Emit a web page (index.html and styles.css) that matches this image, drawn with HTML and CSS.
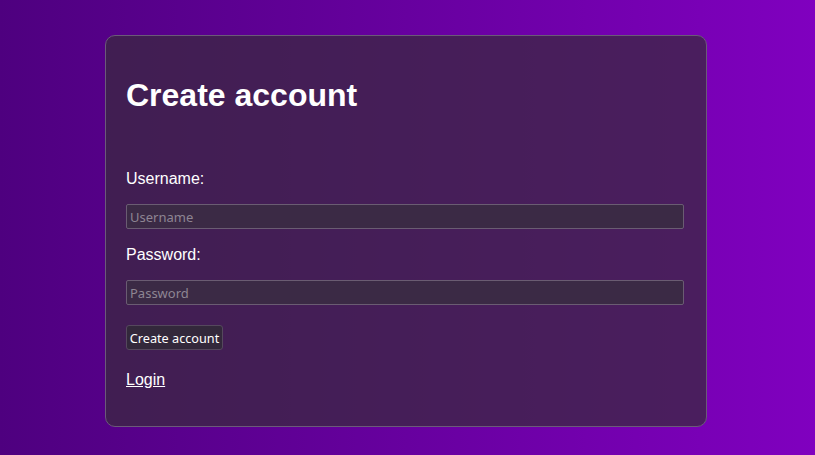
FILE: index.html
```html
<!DOCTYPE html>
<html>
<head>
<meta charset="utf-8">
<link rel="stylesheet" href="styles.css">
</head>
<body>
<main class="page">
  <section class="card">
    <h1 class="title">Create account</h1>
    <form class="form">
      <label class="label" for="u">Username:</label>
      <input class="field" id="u" type="text" placeholder="Username">
      <label class="label" for="p">Password:</label>
      <input class="field field-last" id="p" type="password" placeholder="Password">
      <button class="btn" type="button">Create account</button>
    </form>
    <p class="foot"><a class="link" href="#">Login</a></p>
  </section>
</main>
</body>
</html>
```
FILE: styles.css
```css
html, body {
  margin: 0;
  height: 100%;
}
body {
  background: linear-gradient(to right, #4e007f, #8000bf);
  font-family: "Liberation Sans", Arial, sans-serif;
  color: #fff;
}
.page {
  padding: 35px 3px 0 0;
}
.card {
  box-sizing: border-box;
  width: 602px;
  margin: 0 auto;
  padding: 20px;
  border: 1px solid #6b5a78;
  border-radius: 10px;
  background: rgba(58, 40, 64, 0.74);
}
.title {
  margin: 21px 0 0;
  font-size: 32px;
  line-height: 37px;
  font-weight: bold;
}
.form {
  display: flex;
  flex-direction: column;
  align-items: flex-start;
  margin-top: 56px;
}
.label {
  font-size: 16px;
  line-height: 18px;
  margin-bottom: 16px;
}
.field {
  box-sizing: border-box;
  width: 558px;
  height: 25px;
  margin: 0 0 17px;
  padding: 1px 3px;
  border: 1px solid #6a5c72;
  border-radius: 2px;
  background: #3b2a45;
  color: #fff;
  font-family: "Noto Sans", "Open Sans", sans-serif;
  font-size: 13px;
}
.field::placeholder {
  color: #8e8593;
}
.field-last {
  margin-bottom: 20px;
}
.btn {
  width: 97px;
  height: 25px;
  padding: 0;
  border: 1px solid #55485d;
  border-radius: 3px;
  background: #33283b;
  color: #fff;
  font-family: "Noto Sans", "Open Sans", sans-serif;
  font-size: 12.7px;
}
.foot {
  margin: 21px 0 17px;
  font-size: 16px;
  line-height: 18px;
}
.link {
  color: #fff;
}
```
